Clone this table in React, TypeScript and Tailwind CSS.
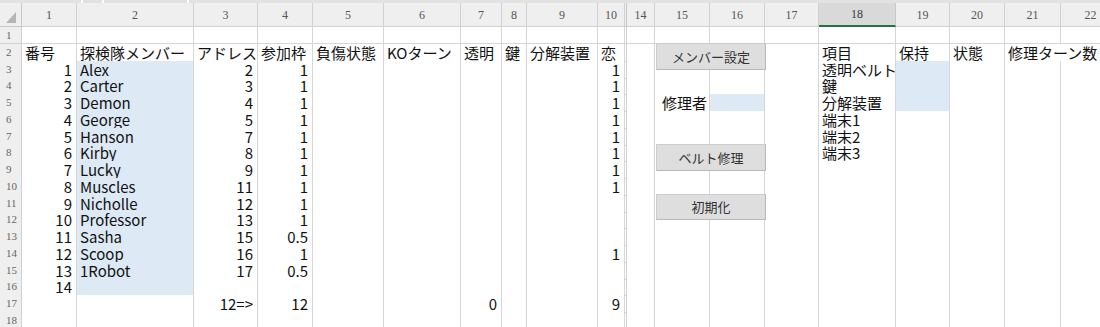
import React from 'react';

type Cell = { v: string | number; right?: boolean; span?: number; indent?: boolean };

// column keys in sheet order; 11-13 are hidden and shown as a double rule
const COL_KEYS: (number | 'gap')[] = [1, 2, 3, 4, 5, 6, 7, 8, 9, 10, 'gap', 14, 15, 16, 17, 18, 19, 20, 21, 22];

const GRID =
  'grid grid-cols-[22px_55px_117px_64px_55px_71px_77px_41px_25px_71px_27px_2px_28px_55px_55px_54px_77px_54px_55px_56px_60px]';

const members: [number, string, number, number, number | null][] = [
  [1, 'Alex', 2, 1, 1],
  [2, 'Carter', 3, 1, 1],
  [3, 'Demon', 4, 1, 1],
  [4, 'George', 5, 1, 1],
  [5, 'Hanson', 7, 1, 1],
  [6, 'Kirby', 8, 1, 1],
  [7, 'Lucky', 9, 1, 1],
  [8, 'Muscles', 11, 1, 1],
  [9, 'Nicholle', 12, 1, null],
  [10, 'Professor', 13, 1, null],
  [11, 'Sasha', 15, 0.5, null],
  [12, 'Scoop', 16, 1, 1],
  [13, '1Robot', 17, 0.5, null],
];

const items = ['透明ベルト', '鍵', '分解装置', '端末1', '端末2', '端末3'];

const cells: Record<string, Cell> = {};
const put = (r: number, c: number, cell: Cell) => {
  cells[`${r}-${c}`] = cell;
};

// header row
['番号', '探検隊メンバー', 'アドレス', '参加枠', '負傷状態', 'KOターン', '透明', '鍵', '分解装置', '恋'].forEach(
  (t, i) => put(2, i + 1, { v: t })
);
put(2, 18, { v: '項目' });
put(2, 19, { v: '保持' });
put(2, 20, { v: '状態' });
put(2, 21, { v: '修理ターン数', span: 2 });

members.forEach(([n, name, addr, slot, love], i) => {
  const r = i + 3;
  put(r, 1, { v: n, right: true });
  put(r, 2, { v: name });
  put(r, 3, { v: addr, right: true });
  put(r, 4, { v: slot, right: true });
  if (love !== null) put(r, 10, { v: love, right: true });
});
put(16, 1, { v: 14, right: true });

items.forEach((t, i) => put(i + 3, 18, { v: t }));
put(5, 15, { v: '修理者', indent: true });

put(17, 3, { v: '12=>', right: true });
put(17, 4, { v: 12, right: true });
put(17, 7, { v: 0, right: true });
put(17, 10, { v: 9, right: true });

const isBlue = (r: number, c: number) =>
  (c === 2 && r >= 3 && r <= 16) || (c === 16 && r === 5) || (c === 19 && r >= 3 && r <= 5);

function SheetRow({ r }: { r: number }) {
  const out: React.ReactNode[] = [];
  let skip = 0;
  out.push(
    <div
      key="h"
      className="bg-[#efefef] border-r border-b border-[#d0d0d0] pl-[6px] text-[11px] leading-[16px] text-[#666] font-['Liberation_Serif',serif]"
    >
      {r}
    </div>
  );
  COL_KEYS.forEach((c) => {
    if (skip > 0) {
      skip--;
      return;
    }
    if (c === 'gap') {
      out.push(<div key="gap" className="border-r border-b border-[#d0d0d0]" />);
      return;
    }
    const cell = cells[`${r}-${c}`];
    if (cell?.span) skip = cell.span - 1;
    out.push(
      <div
        key={c}
        className={`border-r border-b border-[#d6d6d6] whitespace-nowrap overflow-visible text-[15px] leading-[16px] pt-[1px] text-[#111] ${
          isBlue(r, c) ? 'bg-[#dde9f5]' : 'bg-white'
        } ${cell?.right ? 'text-right pr-[4px]' : cell?.indent ? 'pl-[7px]' : 'pl-[3px]'} ${
          cell?.span === 2 ? 'col-span-2' : ''
        }`}
      >
        {cell ? cell.v : ''}
      </div>
    );
  });
  return <div className={`${GRID} h-[16.75px]`}>{out}</div>;
}

function ColumnHeader() {
  return (
    <div className={`${GRID} h-[24px] font-['Liberation_Serif',serif] text-[12px] text-[#555]`}>
      <div className="bg-[#efefef] border-r border-b border-[#c8c8c8] flex items-end justify-end pr-[5px] pb-[3px]">
        <svg width="10" height="11" viewBox="0 0 10 11">
          <polygon points="10,0 10,11 0,11" fill="#b5b5b5" />
        </svg>
      </div>
      {COL_KEYS.map((c) =>
        c === 'gap' ? (
          <div key="gap" className="bg-[#efefef] border-r border-b border-[#c8c8c8]" />
        ) : (
          <div
            key={c}
            className={`flex items-center justify-center border-r ${
              c === 18
                ? 'bg-[#d9d9d9] border-b-2 border-b-[#217346] border-r-[#c8c8c8] text-[#3a3a3a]'
                : 'bg-[#efefef] border-b border-[#d0d0d0]'
            }`}
          >
            {c}
          </div>
        )
      )}
    </div>
  );
}

function SheetButton({ label, className }: { label: string; className: string }) {
  return (
    <div
      className={`absolute left-[656px] w-[110px] flex items-center justify-center bg-[#dedede] border border-[#cdcdcd] border-r-[#b8b8b8] border-b-[#b8b8b8] text-[13px] text-[#333] font-['Noto_Sans_CJK_JP',sans-serif] ${className}`}
    >
      {label}
    </div>
  );
}

export default function App() {
  const rows = Array.from({ length: 18 }, (_, i) => i + 1);
  return (
    <div className="relative w-[1100px] h-[327px] overflow-hidden bg-white font-['Noto_Sans_CJK_JP',sans-serif]">
      {/* bottom edge of the formula bar */}
      <div className="flex h-[3px] gap-[2px] bg-white">
        <div className="w-[81px] bg-[#e2e2e2]" />
        <div className="w-[19px] bg-[#e2e2e2]" />
        <div className="w-[83px] bg-[#e2e2e2]" />
        <div className="flex-1 bg-[#e2e2e2]" />
      </div>

      <ColumnHeader />
      {rows.map((r) => (
        <SheetRow key={r} r={r} />
      ))}

      <SheetButton label="メンバー設定" className="top-[43px] h-[27px]" />
      <SheetButton label="ベルト修理" className="top-[144px] h-[27px]" />
      <SheetButton label="初期化" className="top-[194px] h-[26px]" />
    </div>
  );
}
